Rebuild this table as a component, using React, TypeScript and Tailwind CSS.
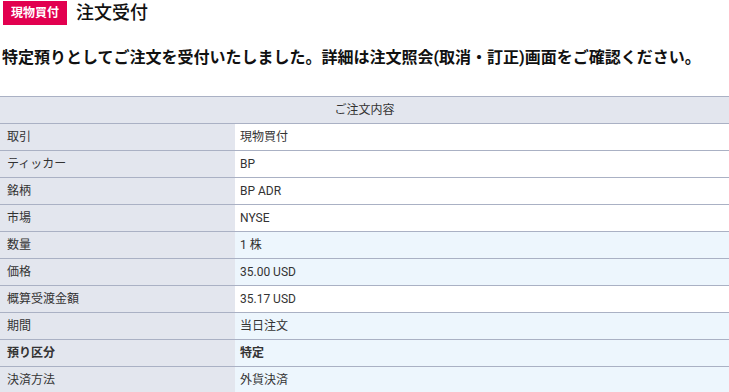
const rows: { label: string; value: string; tint: boolean; bold?: boolean }[] = [
  { label: '取引', value: '現物買付', tint: false },
  { label: 'ティッカー', value: 'BP', tint: false },
  { label: '銘柄', value: 'BP ADR', tint: false },
  { label: '市場', value: 'NYSE', tint: false },
  { label: '数量', value: '1 株', tint: true },
  { label: '価格', value: '35.00 USD', tint: true },
  { label: '概算受渡金額', value: '35.17 USD', tint: false },
  { label: '期間', value: '当日注文', tint: true },
  { label: '預り区分', value: '特定', tint: true, bold: true },
  { label: '決済方法', value: '外貨決済', tint: true },
];

export default function App() {
  return (
    <div
      className="w-[729px] h-[392px] overflow-hidden bg-white text-[#222]"
      style={{ fontFamily: 'Roboto, "Noto Sans CJK JP", sans-serif' }}
    >
      {/* Title */}
      <div className="flex items-center gap-[9px] pt-px pl-[3px]">
        <span className="bg-[#e2004f] text-white text-[12px] font-bold h-6 px-2 flex items-center">
          現物買付
        </span>
        <h1 className="text-[18px] leading-6 font-medium text-[#111]">注文受付</h1>
      </div>

      <p className="mt-[23px] pl-[2px] text-[16px] leading-5 font-bold text-[#111]">
        特定預りとしてご注文を受付いたしました。詳細は注文照会(取消・訂正)画面をご確認ください。
      </p>

      {/* Order table */}
      <table className="mt-[28px] w-full border-collapse text-[12px] text-[#333]">
        <thead>
          <tr className="h-[27px] border-y border-[#aab1c4] bg-[#e3e6ee]">
            <th colSpan={2} className="font-normal text-center">ご注文内容</th>
          </tr>
        </thead>
        <tbody>
          {rows.map((r) => (
            <tr key={r.label} className="h-[27px] border-b border-[#aab1c4]">
              <td className={`w-[235px] bg-[#e3e6ee] pl-[7px] ${r.bold ? 'font-bold' : ''}`}>{r.label}</td>
              <td className={`pl-[5px] ${r.tint ? 'bg-[#edf6fd]' : 'bg-white'} ${r.bold ? 'font-bold' : ''}`}>
                {r.value}
              </td>
            </tr>
          ))}
        </tbody>
      </table>
    </div>
  );
}
